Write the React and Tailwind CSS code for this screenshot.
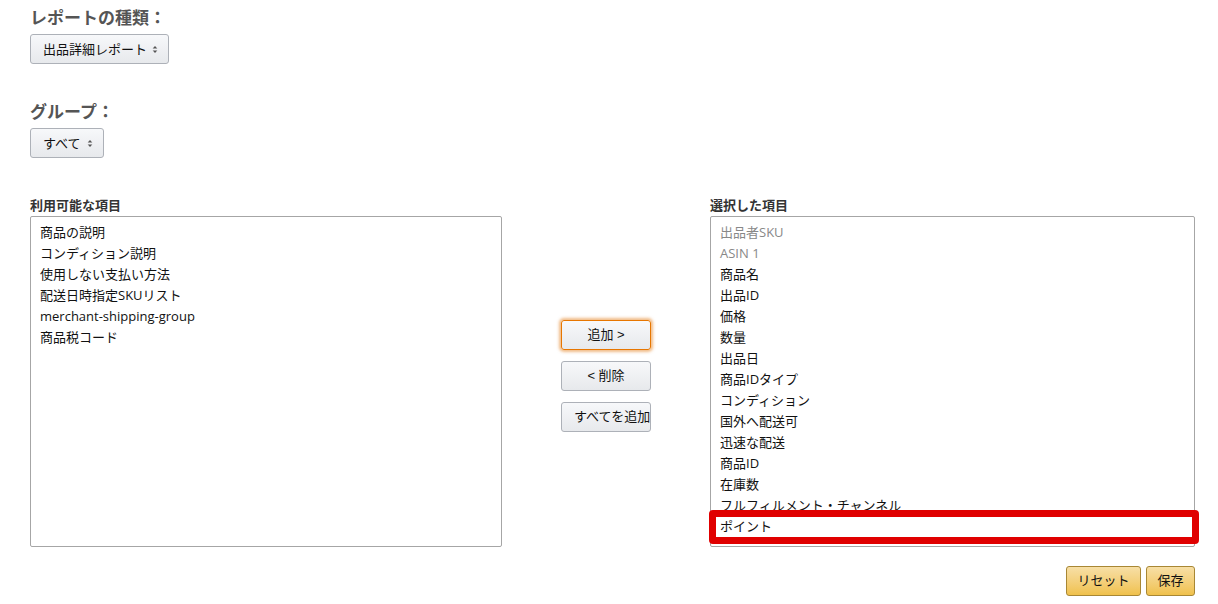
import React from "react";

const font = { fontFamily: '"Liberation Sans", "Noto Sans CJK JP", sans-serif' };
const listFont = { fontFamily: '"Open Sans", "Noto Sans CJK JP", sans-serif' };

function Caret() {
  return (
    <svg width="6" height="9" viewBox="0 0 6 9" className="ml-auto shrink-0">
      <path d="M0.7 3.6 L3 1 L5.3 3.6 Z" fill="#555" />
      <path d="M0.7 5.4 L3 8 L5.3 5.4 Z" fill="#555" />
    </svg>
  );
}

function SelectBox({ label, w }) {
  return (
    <div
      className={`flex items-center h-[30px] ${w} pl-[12px] pr-[10px] rounded-[3px] border border-[#adb1b8] bg-gradient-to-b from-[#f7f8fa] to-[#e7e9ec] text-[13px] text-[#111] whitespace-nowrap`}
    >
      <span className="leading-none">{label}</span>
      <Caret />
    </div>
  );
}

function GrayButton({ children, focus, left }) {
  return (
    <div
      className={`flex items-center w-[90px] h-[30px] overflow-hidden rounded-[3px] border text-[13px] text-[#111] whitespace-nowrap bg-gradient-to-b from-[#f7f8fa] to-[#e7e9ec] ${
        left ? "justify-start pl-[12px]" : "justify-center"
      } ${
        focus
          ? "border-[#e77600] shadow-[0_0_3px_2px_rgba(228,121,17,0.5)]"
          : "border-[#adb1b8]"
      }`}
    >
      {children}
    </div>
  );
}

function YellowButton({ children, w }) {
  return (
    <div
      className={`flex items-center justify-center ${w} h-[30px] rounded-[3px] border border-[#a88734] bg-gradient-to-b from-[#f7dfa5] to-[#f0c14b] text-[13px] text-[#111]`}
    >
      {children}
    </div>
  );
}

const available = [
  "商品の説明",
  "コンディション説明",
  "使用しない支払い方法",
  "配送日時指定SKUリスト",
  "merchant-shipping-group",
  "商品税コード",
];

const selected = [
  { t: "出品者SKU", g: true },
  { t: "ASIN 1", g: true },
  { t: "商品名" },
  { t: "出品ID" },
  { t: "価格" },
  { t: "数量" },
  { t: "出品日" },
  { t: "商品IDタイプ" },
  { t: "コンディション" },
  { t: "国外へ配送可" },
  { t: "迅速な配送" },
  { t: "商品ID" },
  { t: "在庫数" },
  { t: "フルフィルメント・チャンネル" },
  { t: "ポイント" },
];

export default function App() {
  return (
    <div className="w-[1218px] h-[604px] bg-white overflow-hidden pl-[30px]" style={font}>
      <h2 className="pt-[8px] text-[17px] leading-[22px] font-bold text-[#555]">
        レポートの種類：
      </h2>
      <div className="mt-[4px] flex">
        <SelectBox label="出品詳細レポート" w="w-[139px]" />
      </div>
      <h2 className="mt-[38px] text-[17px] leading-[22px] font-bold text-[#555]">
        グループ：
      </h2>
      <div className="mt-[4px] flex">
        <SelectBox label="すべて" w="w-[74px]" />
      </div>

      <div className="mt-[40px] flex items-start">
        <div className="w-[472px] flex flex-col">
          <div className="text-[13px] leading-[16px] font-bold text-[#333] mb-[2px]">
            利用可能な項目
          </div>
          <div
            className="h-[331px] border border-[#a6a6a6] rounded-[2px] pt-[5px] pl-[9px] text-[13px] text-[#111]"
            style={listFont}
          >
            {available.map((t) => (
              <div key={t} className="leading-[21px] h-[21px] whitespace-nowrap">
                {t}
              </div>
            ))}
          </div>
        </div>

        <div className="ml-[59px] mt-[122px] flex flex-col gap-[11px]">
          <GrayButton focus>追加 &gt;</GrayButton>
          <GrayButton>&lt; 削除</GrayButton>
          <GrayButton left>すべてを追加</GrayButton>
        </div>

        <div className="ml-[59px] w-[485px] flex flex-col">
          <div className="text-[13px] leading-[16px] font-bold text-[#333] mb-[2px]">
            選択した項目
          </div>
          <div
            className="relative h-[331px] border border-[#a6a6a6] rounded-[2px] pt-[5px] pl-[9px] text-[13px] text-[#111]"
            style={listFont}
          >
            {selected.map((it) => (
              <div
                key={it.t}
                className={`leading-[21px] h-[21px] whitespace-nowrap ${it.g ? "text-[#888]" : ""}`}
              >
                {it.t}
              </div>
            ))}
            <div className="absolute left-[-2px] right-[-5px] top-[293px] h-[34px] border-[7px] border-[#e00000] rounded-[4px] pointer-events-none" />
          </div>
        </div>
      </div>

      <div className="mt-[19px] w-[1165px] flex justify-end gap-[5px]">
        <YellowButton w="w-[75px]">リセット</YellowButton>
        <YellowButton w="w-[49px]">保存</YellowButton>
      </div>
    </div>
  );
}
